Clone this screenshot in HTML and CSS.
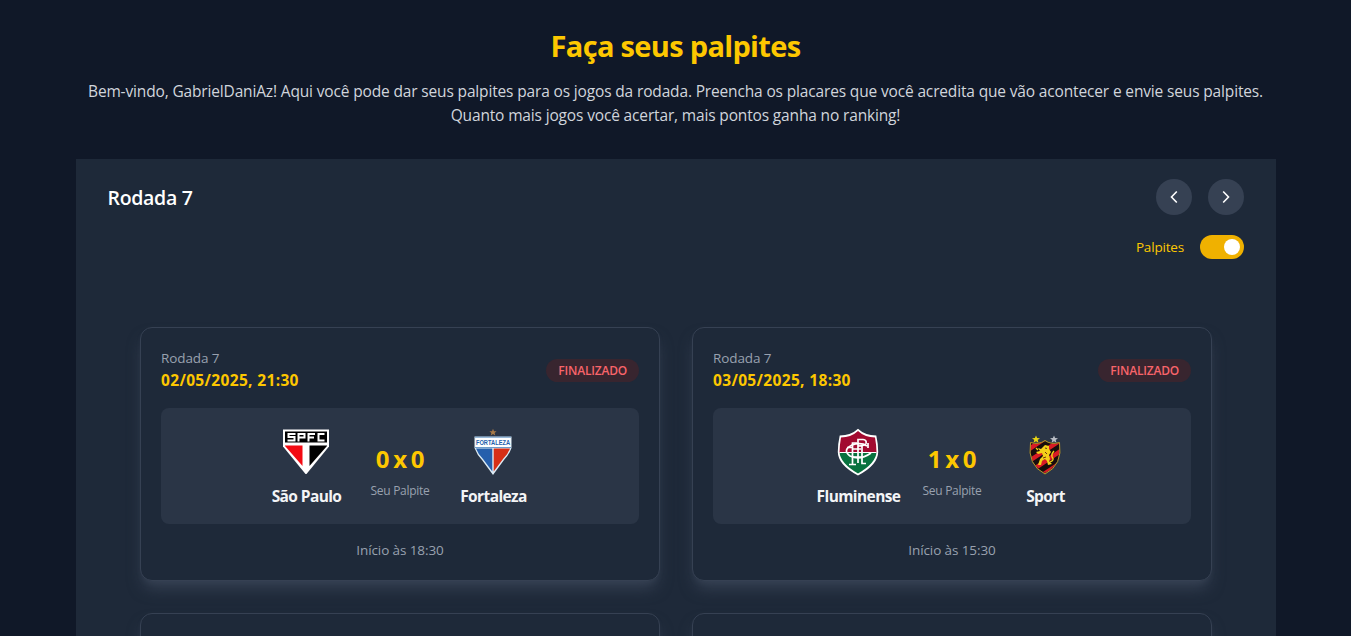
FILE: index.html
```html
<!DOCTYPE html>
<html lang="pt-BR">
<head>
<meta charset="utf-8">
<title>Faça seus palpites</title>
<link rel="stylesheet" href="styles.css">
</head>
<body>
<main class="page">
  <header class="intro">
    <h1 class="intro-title">Faça seus palpites</h1>
    <p class="intro-text">Bem-vindo, GabrielDaniAz! Aqui você pode dar seus palpites para os jogos da rodada. Preencha os placares que você acredita que vão acontecer e envie seus palpites.<br>Quanto mais jogos você acertar, mais pontos ganha no ranking!</p>
  </header>
  <section class="panel">
    <div class="panel-head">
      <h2 class="round-title">Rodada 7</h2>
      <div class="nav">
        <button class="nav-btn" aria-label="Rodada anterior"><svg width="20" height="20" viewBox="0 0 20 20"><path d="M12.800 4.500 7.500 10 12.800 15.500"/></svg></button>
        <button class="nav-btn" aria-label="Próxima rodada"><svg width="20" height="20" viewBox="0 0 20 20"><path d="M7.200 4.500 12.500 10 7.200 15.500"/></svg></button>
      </div>
    </div>
    <div class="toggle-row"><span class="toggle-label">Palpites</span><span class="toggle"><span class="knob"></span></span></div>
    <div class="games">
      <article class="card">
        <div class="card-head">
          <div><div class="card-round">Rodada 7</div><div class="card-date">02/05/2025, 21:30</div></div>
          <span class="badge">FINALIZADO</span>
        </div>
        <div class="match">
          <div class="team">
            <svg class="crest" viewBox="0 0 48 48">
              <path d="M1 1.500H47V18.500L24.500 46H23.500L1 18.500Z" fill="#fff"/>
              <path d="M3 3.500H45V14.500H3Z" fill="#000"/>
              <path d="M3 17.500H20.500V38L3 18Z" fill="#f30b13"/>
              <path d="M27.500 17.500H45V18L27.500 38Z" fill="#000"/>
              <g fill="none" stroke="#fff" stroke-width="2"><path d="M13.500 6H6.500V9H12.500V12.500H5.500"/><path d="M16.500 13.500V6H22.500V9.500H16.500"/><path d="M33 6H26.500V13.500M26.500 9.500H32"/><path d="M42.500 6H36.500V12.500H42.500"/></g>
            </svg>
            <span class="name">São Paulo</span>
          </div>
          <div class="result"><span class="score">0 x 0</span><span class="guess">Seu Palpite</span></div>
          <div class="team">
            <svg class="crest" viewBox="0 0 48 48">
              <path d="M24 .8l1 2.400 2.600.1-2 1.700.7 2.500-2.300-1.400-2.300 1.400.7-2.500-2-1.700 2.600-.1Z" fill="#a87b48"/>
              <path d="M5.500 8.500H42.500V20Q40 27 35 32L24 47 13 32Q8 27 5.500 20Z" fill="#dcecf5"/>
              <path d="M6.500 9.500H41.500V19H6.500Z" fill="#fff"/>
              <path d="M7 20.500H23.300V43.500L14 31Q9 26 7 20.500Z" fill="#255fac"/>
              <path d="M24.700 20.500H41Q39 26 34 31L24.700 43.500Z" fill="#d62f16"/>
              <path d="M6 9.200H42M6 19.500H42" stroke="#3b78b8" stroke-width=".7"/>
              <text x="0" y="0" text-anchor="middle" transform="translate(24 17.200) scale(.84 1.080)" class="crest-text">FORTALEZA</text>
            </svg>
            <span class="name">Fortaleza</span>
          </div>
        </div>
        <div class="start">Início às 18:30</div>
      </article>
      <article class="card">
        <div class="card-head">
          <div><div class="card-round">Rodada 7</div><div class="card-date">03/05/2025, 18:30</div></div>
          <span class="badge">FINALIZADO</span>
        </div>
        <div class="match">
          <div class="team">
            <svg class="crest" viewBox="0 0 48 48">
              <defs><clipPath id="flu"><path d="M24 3Q31 9.500 41 9.500 42.500 18 42.500 24 42 35 24 45.500 6 35 5.500 24 5.500 18 7 9.500 17 9.500 24 3Z"/></clipPath></defs>
              <path d="M24 .8Q31 7.500 42.300 7.500 44.200 16 44.200 24 44 37 24 47.500 4 37 3.800 24 3.800 16 5.700 7.500 17 7.500 24 .8Z" fill="#fff"/>
              <g clip-path="url(#flu)"><path d="M0 0H48V25H0Z" fill="#a20a30"/><path d="M0 25H48V48H0Z" fill="#08723e"/><path d="M4 24.500H44" stroke="#fff" stroke-width="1.200"/></g>
              <g fill="none" stroke="#fff" stroke-width="1.700"><path d="M18.500 36V15H23M18.500 21H27M15 36.500H22M24 35V11.500H29Q33 12 32 15.500Q31 18 24 18M28 18V35.500H32"/><path d="M34 15V20M33 18Q27 14 18 17Q8 22 16 28Q26 33 37 25"/><path d="M13 19.500H18M19 29H28"/></g>
            </svg>
            <span class="name">Fluminense</span>
          </div>
          <div class="result"><span class="score">1 x 0</span><span class="guess">Seu Palpite</span></div>
          <div class="team">
            <svg class="crest" viewBox="0 0 48 48">
              <defs><clipPath id="sport"><path d="M24 13Q30 17 38 15Q41 37 24 45Q7 37 10 15Q18 17 24 13Z"/></clipPath></defs>
              <path d="M15 7.500l1.100 2.600 2.900.1-2.300 1.800.8 2.800-2.500-1.500-2.500 1.500.8-2.800-2.300-1.800 2.900-.1Z" fill="#e8d414"/>
              <path d="M33 7.500l1.100 2.600 2.900.1-2.300 1.800.8 2.800-2.500-1.500-2.500 1.500.8-2.800-2.300-1.800 2.900-.1Z" fill="#b9bdc5"/>
              <g clip-path="url(#sport)"><path d="M0 0H48V48H0Z" fill="#170d0c"/><path d="M4 24 26 9M5 35 43 10M10 43 44 20M20 48 44 32" stroke="#d81b24" stroke-width="4.500"/></g>
              <path d="M24 12.500Q30 17 38.500 14.500Q42 37 24 46Q6 37 9.500 14.500Q18 17 24 12.500Z" fill="none" stroke="#b99824" stroke-width="1"/>
              <path d="M22 19 24 17 28 18 28 21 30 24 28 27 29 31 28 33 31 36 27 37 26 33 24 31 21 33 20 37 17 37 19 31 22 28 21 25 17 26 15 24 19 23 17 20 20 21Z" fill="#f3d018"/>
              <path d="M29 34Q34 32 31 29Q30 26 33 23M15 20 17 22" fill="none" stroke="#f3d018" stroke-width="1.300"/>
              <path d="M24 20 26 20.500M24 24 26 26M22 30 25 29" stroke="#6b3510" stroke-width="1"/>
            </svg>
            <span class="name">Sport</span>
          </div>
        </div>
        <div class="start">Início às 15:30</div>
      </article>
      <article class="card"></article>
      <article class="card"></article>
    </div>
  </section>
</main>
</body>
</html>
```
FILE: styles.css
```css
* { box-sizing: border-box; margin: 0; }
html, body { height: 100%; }
body { background: #101828; font-family: "Open Sans", "Noto Sans", sans-serif; color: #fff; overflow: hidden; }
.page { width: 1200px; margin-left: 76px; height: 636px; }
.intro { height: 159px; padding: 28px 1px 0 0; text-align: center; white-space: nowrap; }
.intro-title { color: #fdc700; font-size: 29px; line-height: 36px; font-weight: 700; letter-spacing: -0.68px; }
.intro-text { margin-top: 15px; color: #d1d5dc; font-size: 15.5px; line-height: 24px; letter-spacing: -0.153px; }
.panel { background: #1e2939; height: 477px; }
.panel-head { display: flex; justify-content: space-between; align-items: center; padding: 20px 32px 0 31.5px; }
.round-title { font-size: 19.5px; font-weight: 600; line-height: 28px; padding-top: 2px; letter-spacing: -0.3px; }
.nav { display: flex; gap: 16px; }
.nav-btn { width: 36px; height: 36px; border: 0; border-radius: 50%; background: #364153; padding: 8px; }
.nav-btn svg { display: block; fill: none; stroke: #fff; stroke-width: 1.6; }
.toggle-row { display: flex; justify-content: flex-end; align-items: center; padding: 20px 32px 0; gap: 16px; height: 44px; }
.toggle-label { color: #fdc700; font-size: 13.5px; line-height: 20px; letter-spacing: -0.18px; }
.toggle { width: 44px; height: 24px; padding: 4px; border-radius: 12px; background: #f0b100; display: flex; justify-content: flex-end; }
.knob { width: 16px; height: 16px; border-radius: 50%; background: #fff; }
.games { padding: 68px 64px 0; display: grid; grid-template-columns: 520px 520px; grid-auto-rows: 254px; gap: 32px; height: 377px; overflow: hidden; }
.card { background: #1e2939; border: 1px solid #364153; border-radius: 12px; padding: 20px; box-shadow: 0 10px 15px -3px #364153, 0 4px 6px -4px #364153; }
.card-head { display: flex; justify-content: space-between; height: 60px; }
.card-round { color: #99a1af; font-size: 13.5px; line-height: 20px; letter-spacing: -0.1px; }
.card-date { color: #fdc700; font-weight: 700; font-size: 15.5px; line-height: 24px; letter-spacing: 0.34px; }
.badge { margin-top: 11px; height: 23px; line-height: 24px; border-radius: 12px; padding: 0 12px; background: #38252f; color: #f8646a; font-size: 12px; font-weight: 600; letter-spacing: -0.2px; }
.match { display: grid; grid-template-columns: 93px 94px 93px; justify-content: center; height: 116px; padding-top: 20px; border-radius: 8px; background: #2a3546; white-space: nowrap; }
.team, .result { display: flex; flex-direction: column; align-items: center; }
.crest { width: 48px; height: 48px; margin: 0 1px 8px 0; }
.crest-text { font: 700 6.8px "Liberation Sans", sans-serif; fill: #255fac; }
.name { color: #f3f4f6; font-size: 15.5px; font-weight: 700; line-height: 24px; letter-spacing: -0.6px; }
.score { color: #fdc700; font-size: 24px; font-weight: 700; line-height: 32px; margin-top: 15px; letter-spacing: -0.3px; word-spacing: -2px; }
.guess { color: #99a1af; font-size: 12px; line-height: 16px; margin-top: 8px; letter-spacing: -0.3px; }
.start { text-align: center; color: #99a1af; font-size: 13.5px; line-height: 20px; margin-top: 16px; letter-spacing: -0.1px; }
```
